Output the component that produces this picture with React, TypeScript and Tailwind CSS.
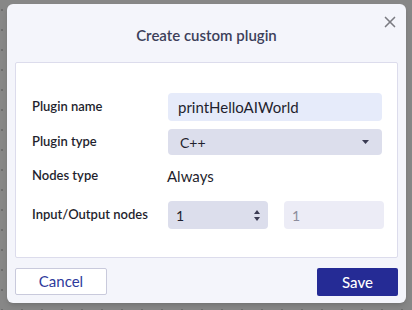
import { X } from "lucide-react";

export default function App() {
  return (
    <div
      className="w-[412px] h-[310px] bg-[#878787] bg-[radial-gradient(circle,#6e6e6e_1px,transparent_1.5px)] bg-[length:20px_20px] bg-[position:-8px_0px] pl-[7px] pt-[4px] overflow-hidden"
      style={{ fontFamily: "Lato, 'Noto Sans', sans-serif" }}
    >
      <div className="relative w-[399px] h-[299px] rounded-md bg-[#f4f5fb] flex flex-col shadow-md">
        <button className="absolute right-[7px] top-[9px] text-[#7b7b82]">
          <X size={18} strokeWidth={2.2} />
        </button>
        <h2 className="h-[58px] flex items-center justify-center pt-[4px] text-[15px] font-semibold text-[#3c3f5a]">
          Create custom plugin
        </h2>

        <div className="mx-[8px] h-[196px] bg-white border border-[#dcdcec] rounded-[2px] pt-[30px] pl-[16px] text-[13px] text-[#1f1f2e]">
          <div className="flex items-center h-[28px]">
            <span className="w-[136px] font-semibold">Plugin name</span>
            <div className="w-[214px] h-[28px] rounded bg-[#e6ebfa] flex items-center px-[10px] text-[15px] text-[#1f1f2e]">
              printHelloAIWorld
            </div>
          </div>

          <div className="flex items-center h-[26px] mt-[8px]">
            <span className="w-[136px] font-semibold">Plugin type</span>
            <div className="w-[214px] h-[26px] rounded bg-[#dcdeec] flex items-center justify-between pl-[12px] pr-[13px] text-[14px]">
              <span>C++</span>
              <svg width="7" height="4" viewBox="0 0 7 4">
                <path d="M0 0h7L3.5 4z" fill="#3a3a52" />
              </svg>
            </div>
          </div>

          <div className="flex items-center h-[20px] mt-[11px]">
            <span className="w-[136px] font-semibold">Nodes type</span>
            <span className="text-[15px] -ml-[1px]">Always</span>
          </div>

          <div className="flex items-center h-[28px] mt-[15px]">
            <span className="w-[136px] font-semibold">Input/Output nodes</span>
            <div className="w-[100px] h-[28px] rounded bg-[#dcdeec] flex items-center justify-between pl-[8px] pr-[8px] text-[14px]">
              <span>1</span>
              <svg width="6" height="13" viewBox="0 0 6 13">
                <path d="M0 5h6L3 1z M0 8h6L3 12z" fill="#3a3a52" />
              </svg>
            </div>
            <div className="ml-[16px] w-[100px] h-[28px] rounded bg-[#ececf6] flex items-center pl-[8px] text-[14px] text-[#8d8d9c]">
              1
            </div>
          </div>
        </div>

        <div className="flex justify-between mx-[8px] mt-[10px]">
          <button className="w-[92px] h-[27px] bg-white border border-[#c9cadc] rounded-[2px] text-[15px] text-[#2e3a9c]">
            Cancel
          </button>
          <button className="w-[81px] h-[28px] bg-[#252b95] rounded-[2px] text-[15px] text-white font-medium">
            Save
          </button>
        </div>
      </div>
    </div>
  );
}
